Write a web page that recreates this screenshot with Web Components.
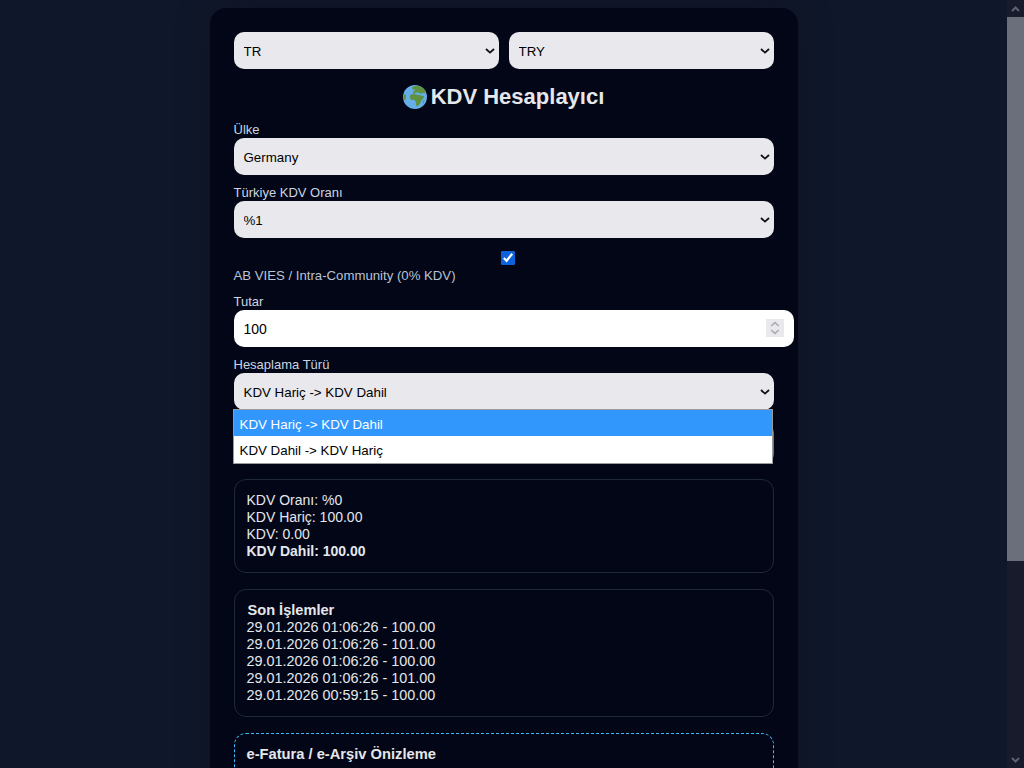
<!DOCTYPE html>
<html lang="tr">
<head>
<meta charset="utf-8">
<title>KDV Hesaplayıcı</title>
<style>
    html, body { margin: 0; height: 100%; overflow: hidden; }
    body { background: #0f172a; font-family: "Liberation Sans", Arial, sans-serif; }
    .date { font-size: 14.4px; }
    .head { font-size: 14.7px; }
    .nudge { margin-left: 1px; font-size: 14.6px; }
</style>
</head>
<body>
<vat-shell>
    <vat-card>
        <vat-row>
            <vat-select options="TR"></vat-select>
            <vat-select options="TRY"></vat-select>
        </vat-row>
        <vat-title>KDV Hesaplayıcı</vat-title>
        <vat-field label="Ülke"><vat-select options="Germany"></vat-select></vat-field>
        <vat-field label="Türkiye KDV Oranı"><vat-select options="%1"></vat-select></vat-field>
        <vat-check label="AB VIES / Intra-Community (0% KDV)"></vat-check>
        <vat-field label="Tutar"><vat-number value="100"></vat-number></vat-field>
        <vat-field label="Hesaplama Türü">
            <vat-select options="KDV Hariç -> KDV Dahil|KDV Dahil -> KDV Hariç" open></vat-select>
        </vat-field>
        <vat-button>Hesapla</vat-button>
        <vat-box>
            <div>KDV Oranı: %0</div>
            <div>KDV Hariç: 100.00</div>
            <div>KDV: 0.00</div>
            <div><b>KDV Dahil: 100.00</b></div>
        </vat-box>
        <vat-box>
            <div class="head nudge"><b>Son İşlemler</b></div>
            <div class="date">29.01.2026 01:06:26 - 100.00</div>
            <div class="date">29.01.2026 01:06:26 - 101.00</div>
            <div class="date">29.01.2026 01:06:26 - 100.00</div>
            <div class="date">29.01.2026 01:06:26 - 101.00</div>
            <div class="date">29.01.2026 00:59:15 - 100.00</div>
        </vat-box>
        <vat-box dashed>
            <div class="head"><b>e-Fatura / e-Arşiv Önizleme</b></div>
        </vat-box>
    </vat-card>
</vat-shell>

<script>
    class VatShell extends HTMLElement {
        constructor() {
            super();
            this.attachShadow({ mode: 'open' });
            this.shadowRoot.innerHTML = `
                <style>
                    :host { display: flex; height: 100vh; overflow: hidden; }
                    .page { flex: 1; min-width: 0; padding-top: 8px; display: flex; justify-content: center; overflow: hidden; }
                    .bar { flex: none; width: 17px; display: flex; flex-direction: column; background: #171b2b; }
                    .end { flex: none; height: 17px; display: flex; align-items: center; justify-content: center; }
                    .track { flex: 1; }
                    .thumb { height: 544px; background: #6b6f7b; }
                </style>
                <div class="page"><slot></slot></div>
                <div class="bar">
                    <div class="end">
                        <svg width="9" height="6" viewBox="0 0 9 6"><path d="M1 5 L4.5 1.5 L8 5" fill="none" stroke="#5f626e" stroke-width="2"/></svg>
                    </div>
                    <div class="track"><div class="thumb"></div></div>
                    <div class="end">
                        <svg width="9" height="6" viewBox="0 0 9 6"><path d="M1 1 L4.5 4.5 L8 1" fill="none" stroke="#5f626e" stroke-width="2"/></svg>
                    </div>
                </div>
            `;
        }
    }

    class VatCard extends HTMLElement {
        constructor() {
            super();
            this.attachShadow({ mode: 'open' });
            this.shadowRoot.innerHTML = `
                <style>
                    :host {
                        display: flex;
                        flex-direction: column;
                        flex: none;
                        box-sizing: border-box;
                        width: 588px;
                        height: 1020px;
                        padding: 24px;
                        background: #020617;
                        border-radius: 16px;
                        box-shadow: 0 0 30px rgba(24, 20, 30, 0.5);
                        color: #e5e7eb;
                        font-size: 14px;
                    }
                </style>
                <slot></slot>
            `;
        }
    }

    class VatRow extends HTMLElement {
        constructor() {
            super();
            this.attachShadow({ mode: 'open' });
            this.shadowRoot.innerHTML = `
                <style>
                    :host { display: grid; grid-template-columns: 1fr 1fr; gap: 10px; }
                </style>
                <slot></slot>
            `;
        }
    }

    class VatTitle extends HTMLElement {
        constructor() {
            super();
            this.attachShadow({ mode: 'open' });
            this.shadowRoot.innerHTML = `
                <style>
                    :host {
                        display: flex;
                        justify-content: center;
                        align-items: center;
                        gap: 4px;
                        margin: 15px 0 3px;
                        height: 25px;
                        font-size: 22px;
                        font-weight: bold;
                        color: #e5e7eb;
                    }
                    svg { display: block; flex: none; }
                </style>
                <svg width="24" height="24" viewBox="0 0 24 24">
                    <circle cx="12" cy="12" r="12" fill="#66aee8"/>
                    <path d="M9 2.5 C11 0.6 15 0.2 17.5 1.4 C20 2.6 21.8 4.6 22.8 6.6 L21.5 8.4 C20.6 7.6 19.6 7.8 18.8 8.6 L16.6 8.2 C15.6 7.4 14 7.2 12.6 7.6 L12 8.8 L10.4 8.6 L10.2 6.6 C11.2 6.2 12 5.4 11.8 4.6 L9.6 4.4 Z" fill="#5f9140"/>
                    <path d="M7.6 9.8 C9.4 8.8 11.6 8.8 13 9.6 L15 10 C16.4 9.8 17.8 10.2 18.6 11 L20.6 10.8 L21 12 C20.4 13.6 19.4 14.6 18.4 15.2 C18 17 17 18.6 16 19.8 L14.6 21.2 L13.4 21 C13 19.4 12.6 18 12.8 16.6 C12 15.6 11.6 15 10.6 15 C9 15.2 7.6 14.6 7 13 C6.6 11.8 6.8 10.6 7.6 9.8 Z" fill="#5f9140"/>
                    <path d="M0.4 10.5 C1 9.6 1.8 9.2 2.6 9.6 C3.2 11 3 12.6 2.6 14.4 L1 15.6 C0.4 14.2 0.2 12.4 0.4 10.5 Z" fill="#5f9140"/>
                    <path d="M20.4 15.6 L21.4 15 L20.8 18 L19.8 18.4 Z" fill="#5f9140"/>
                </svg>
                <span><slot></slot></span>
            `;
        }
    }

    class VatField extends HTMLElement {
        constructor() {
            super();
            this.attachShadow({ mode: 'open' });
            this.shadowRoot.innerHTML = `
                <style>
                    :host { display: block; margin-top: 10px; }
                    label { display: block; height: 15px; margin-bottom: 1px; font-size: 13px; line-height: 15px; color: #cbd5e1; }
                </style>
                <label></label>
                <slot></slot>
            `;
            this.shadowRoot.querySelector('label').textContent = this.getAttribute('label');
        }
    }

    class VatSelect extends HTMLElement {
        constructor() {
            super();
            this.attachShadow({ mode: 'open' });
            this.shadowRoot.innerHTML = `
                <style>
                    :host { display: block; position: relative; }
                    select {
                        display: block;
                        box-sizing: border-box;
                        width: 100%;
                        height: 37px;
                        padding: 11px 10px 9px;
                        border: none;
                        border-radius: 10px;
                        background-color: #e9e8ed;
                        color: #000;
                        font: 13.33px "Liberation Sans", Arial, sans-serif;
                        appearance: none;
                    }
                    .chevron { position: absolute; top: 16px; right: 4px; pointer-events: none; }
                    .menu {
                        position: absolute;
                        z-index: 2;
                        top: 36px;
                        left: -1px;
                        right: 1px;
                        border: 1px solid #9a9a9a;
                        background: #fff;
                        color: #000;
                        font-size: 13.33px;
                    }
                    .item { height: 26px; line-height: 29px; padding-left: 6px; }
                    .item + .item { height: 27px; }
                    .item.on { background: #3297fd; color: #fff; }
                </style>
                <select></select>
                <svg class="chevron" width="10" height="6" viewBox="0 0 10 6"><path d="M1 1 L5 4.6 L9 1" fill="none" stroke="#111" stroke-width="1.8"/></svg>
            `;
            const options = this.getAttribute('options').split('|');
            const select = this.shadowRoot.querySelector('select');
            for (const text of options) {
                const option = document.createElement('option');
                option.textContent = text;
                select.appendChild(option);
            }
            if (this.hasAttribute('open')) {
                const menu = document.createElement('div');
                menu.className = 'menu';
                options.forEach((text, i) => {
                    const item = document.createElement('div');
                    item.className = i === 0 ? 'item on' : 'item';
                    item.textContent = text;
                    menu.appendChild(item);
                });
                this.shadowRoot.appendChild(menu);
            }
        }
    }

    class VatCheck extends HTMLElement {
        constructor() {
            super();
            this.attachShadow({ mode: 'open' });
            this.shadowRoot.innerHTML = `
                <style>
                    :host { display: block; margin-top: 13px; }
                    .box { display: flex; justify-content: center; padding-left: 8px; }
                    input { display: block; width: 14px; height: 14px; margin: 0; accent-color: #0b62dc; }
                    label { display: block; margin-top: 2px; font-size: 13.2px; line-height: 17px; color: #b9c3d6; }
                </style>
                <div class="box"><input type="checkbox" checked></div>
                <label></label>
            `;
            this.shadowRoot.querySelector('label').textContent = this.getAttribute('label');
        }
    }

    class VatNumber extends HTMLElement {
        constructor() {
            super();
            this.attachShadow({ mode: 'open' });
            this.shadowRoot.innerHTML = `
                <style>
                    :host { display: block; position: relative; }
                    input {
                        display: block;
                        box-sizing: content-box;
                        width: 100%;
                        height: 17px;
                        padding: 10px;
                        border: none;
                        border-radius: 10px;
                        background: #fff;
                        color: #000;
                        font: 14px "Liberation Sans", Arial, sans-serif;
                    }
                    input::-webkit-inner-spin-button { appearance: none; }
                    .spin {
                        position: absolute;
                        top: 9px;
                        right: -10px;
                        width: 18px;
                        height: 18px;
                        display: flex;
                        align-items: center;
                        justify-content: center;
                        background: #e9e8ed;
                        pointer-events: none;
                    }
                    svg { display: block; }
                </style>
                <input type="number">
                <div class="spin">
                    <svg width="10" height="14" viewBox="0 0 10 14" fill="none" stroke="#a9a9b2" stroke-width="1.6">
                        <path d="M1.2 5 L5 1.6 L8.8 5"/>
                        <path d="M1.2 9 L5 12.4 L8.8 9"/>
                    </svg>
                </div>
            `;
            this.shadowRoot.querySelector('input').value = this.getAttribute('value');
        }
    }

    class VatButton extends HTMLElement {
        constructor() {
            super();
            this.attachShadow({ mode: 'open' });
            this.shadowRoot.innerHTML = `
                <style>
                    :host { display: block; margin-top: 13px; }
                    button {
                        display: block;
                        width: 100%;
                        height: 41px;
                        border: none;
                        border-radius: 10px;
                        background: #22a35a;
                        color: #fff;
                        font: bold 14px "Liberation Sans", Arial, sans-serif;
                    }
                </style>
                <button><slot></slot></button>
            `;
        }
    }

    class VatBox extends HTMLElement {
        constructor() {
            super();
            this.attachShadow({ mode: 'open' });
            this.shadowRoot.innerHTML = `
                <style>
                    :host {
                        display: block;
                        margin-top: 15px;
                        padding: 12px;
                        border: 1px solid #1e293b;
                        border-radius: 12px;
                        font-size: 14px;
                        line-height: 17px;
                        color: #e5e7eb;
                    }
                    :host(:not(:first-of-type)) { margin-top: 16px; }
                    :host([dashed]) { border: 1px dashed #38bdf8; min-height: 260px; }
                </style>
                <slot></slot>
            `;
        }
    }

    customElements.define('vat-shell', VatShell);
    customElements.define('vat-card', VatCard);
    customElements.define('vat-row', VatRow);
    customElements.define('vat-title', VatTitle);
    customElements.define('vat-field', VatField);
    customElements.define('vat-select', VatSelect);
    customElements.define('vat-check', VatCheck);
    customElements.define('vat-number', VatNumber);
    customElements.define('vat-button', VatButton);
    customElements.define('vat-box', VatBox);
</script>
</body>
</html>
